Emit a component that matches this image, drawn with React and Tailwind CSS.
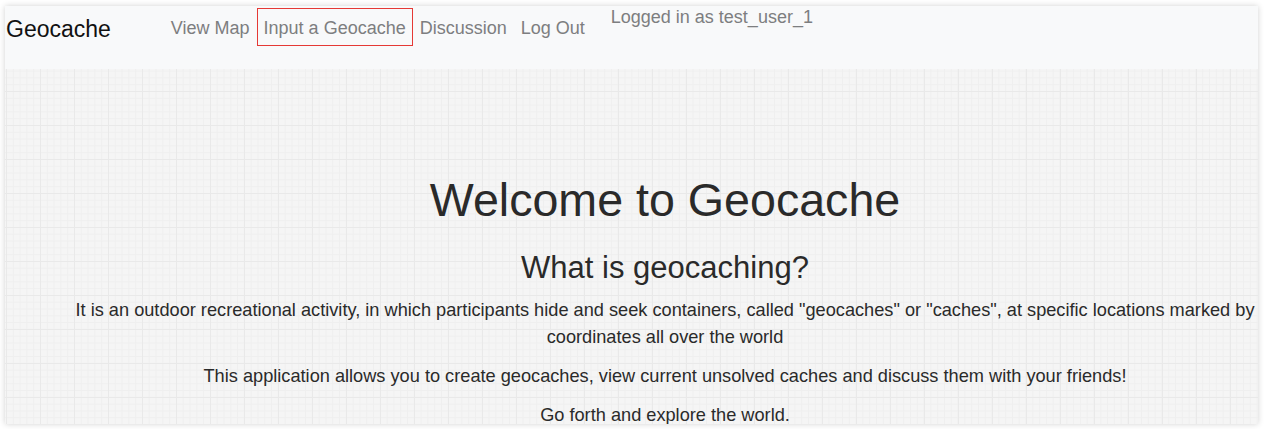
import React from "react";

const links = ["View Map", "Input a Geocache", "Discussion", "Log Out"];

const App = () => {
  return (
    <div className="w-[1266px] h-[429px] bg-white pt-[6px] pl-[5px] pr-[8px] pb-[5px] font-['Liberation_Sans',Arial,sans-serif]">
      <div className="h-full flex flex-col overflow-hidden shadow-[0_0_6px_rgba(0,0,0,0.18)]">
        {/* navbar */}
        <nav className="h-[63px] shrink-0 bg-[#f8f9fa] flex items-start pl-px">
          <span className="mt-[6px] text-[23px] leading-[34px] text-[#111]">Geocache</span>
          <ul className="flex items-start ml-[53px] mt-[2px]">
            {links.map((l) => (
              <li key={l}>
                <a
                  href="#"
                  className={
                    l === "Input a Geocache"
                      ? "block border border-[#e53935] px-[6px] pt-[6px] pb-[3px] text-[18px] leading-[27px] text-[#7d7e80]"
                      : "block border border-transparent px-[6px] pt-[6px] pb-[3px] text-[18px] leading-[27px] text-[#7d7e80]"
                  }
                >
                  {l}
                </a>
              </li>
            ))}
          </ul>
          <span className="ml-[19px] mt-px text-[18px] leading-[20px] text-[#7d7e80]">Logged in as test_user_1</span>
        </nav>

        {/* main */}
        <main className="flex-1 pl-[65px] pt-[104px] text-[#2a2a2a] bg-[#f5f5f5] bg-[linear-gradient(#e9e9e9_1px,transparent_1px),linear-gradient(90deg,#e9e9e9_1px,transparent_1px),linear-gradient(#efefef_1px,transparent_1px),linear-gradient(90deg,#efefef_1px,transparent_1px)] bg-[length:34px_34px,34px_34px,6.8px_6.8px,6.8px_6.8px] bg-[position:1px_22px,1px_22px,1px_22px,1px_22px]">
          <div className="w-[1190px] text-center">
            <h1 className="text-[46.6px] leading-[55px]">Welcome to Geocache</h1>
            <h3 className="mt-[21px] text-[31px] leading-[37px]">What is geocaching?</h3>
            <p className="mt-[11px] text-[18.2px] leading-[27px]">
              It is an outdoor recreational activity, in which participants hide and seek containers, called "geocaches" or "caches", at specific locations marked by coordinates all over the world
            </p>
            <p className="mt-[12px] text-[18.2px] leading-[27px]">
              This application allows you to create geocaches, view current unsolved caches and discuss them with your friends!
            </p>
            <p className="mt-[12px] text-[18.2px] leading-[27px]">Go forth and explore the world.</p>
          </div>
        </main>
      </div>
    </div>
  );
};

export default App;
